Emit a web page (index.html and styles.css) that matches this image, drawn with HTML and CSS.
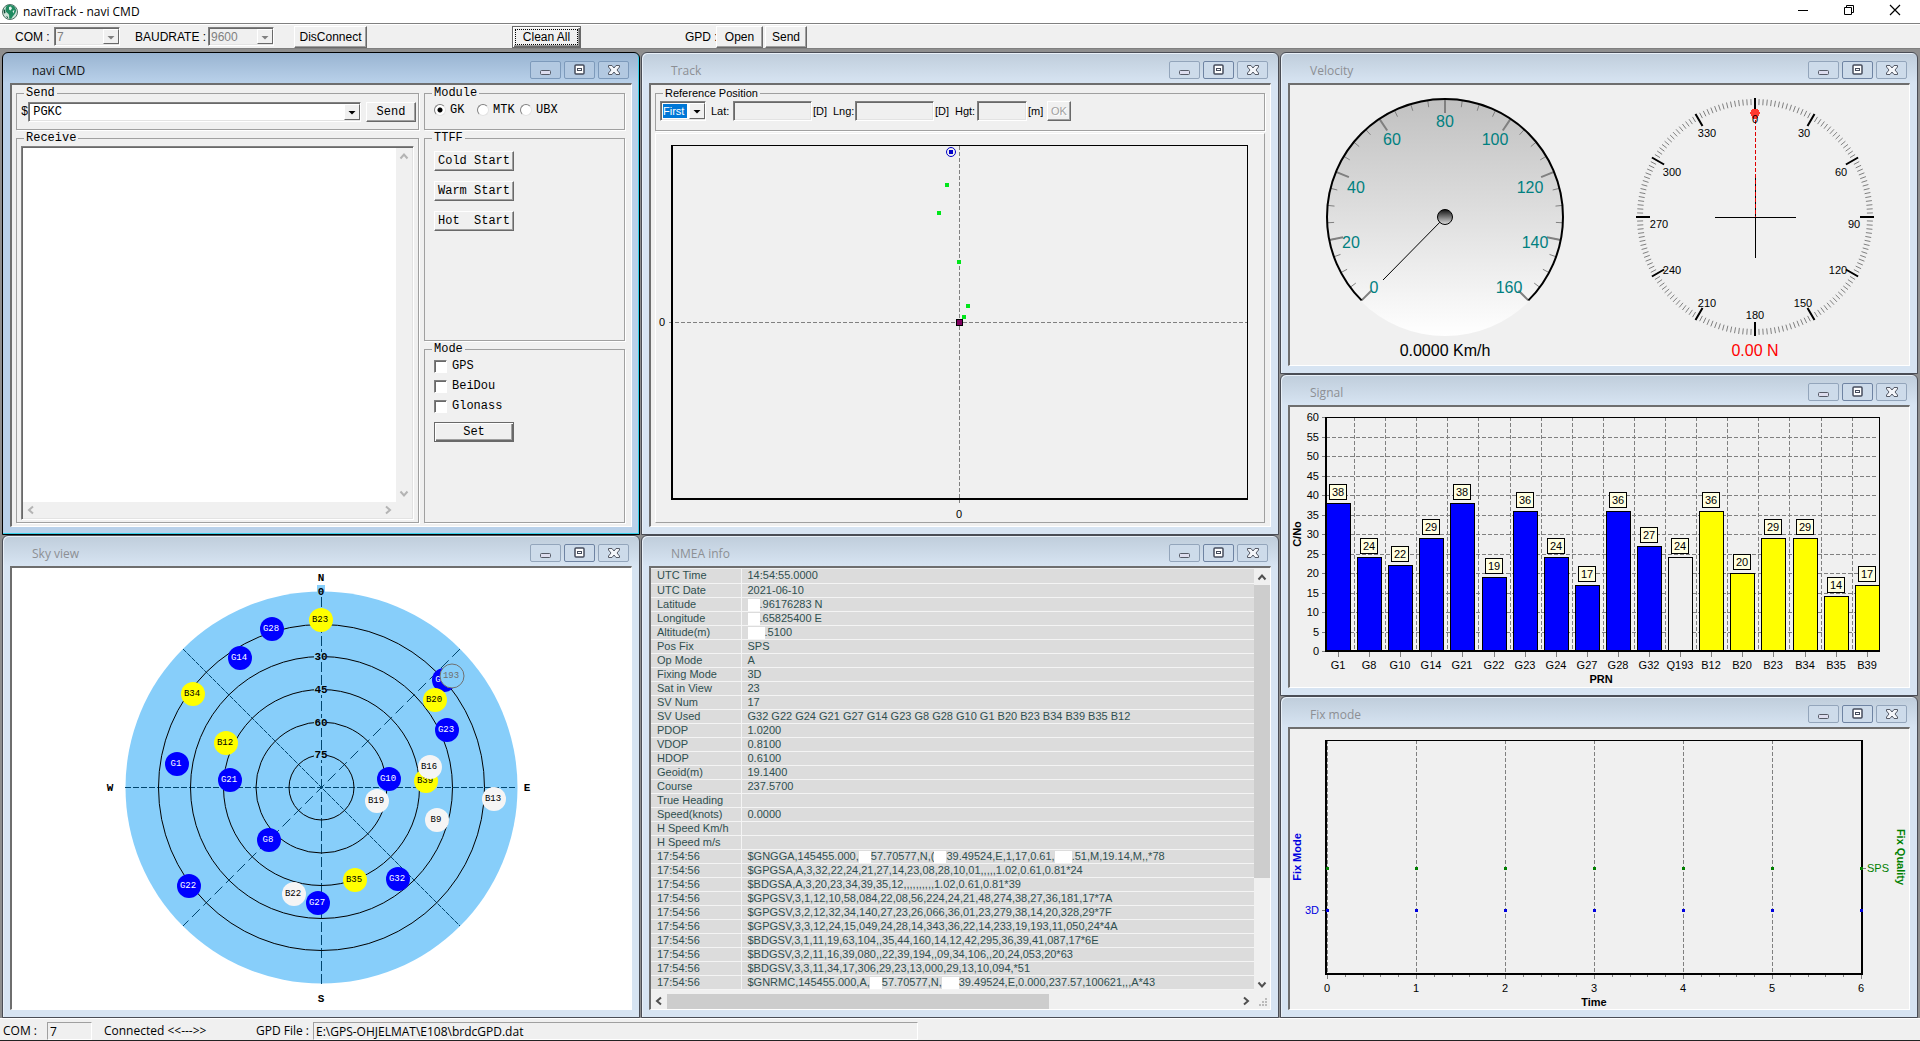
FILE: index.html
```html
<!DOCTYPE html>
<html lang="en">
<head>
<meta charset="utf-8">
<title>naviTrack - navi CMD</title>
<link rel="stylesheet" href="styles.css">
</head>
<body>
<svg class="defs" aria-hidden="true">
  <symbol id="min" viewBox="0 0 14 12"><rect x="1.500" y="6.500" width="10" height="4" rx="1" fill="#dde" stroke="#555a66"/></symbol>
  <symbol id="max" viewBox="0 0 14 12"><rect x="2" y="1" width="9" height="9" rx="1" fill="#fff" stroke="#454c5c" stroke-width="1.500"/><rect x="4.500" y="4.500" width="4" height="2" fill="#fff" stroke="#454c5c"/></symbol>
  <symbol id="cls" viewBox="0 0 14 12"><path d="M1.500 1.500h3.500L7 4l2-2.500h3.500v1.500L10 6l2.500 3v1.500H9L7 8l-2 2.500H1.500V9L4 6 1.500 3z" fill="#f4f6fa" stroke="#555a66" stroke-linejoin="round"/></symbol>
  <symbol id="up" viewBox="0 0 10 10"><path d="M1.500 7.500L5 3.500l3.500 4" fill="none" stroke="currentColor" stroke-width="2"/></symbol>
  <symbol id="down" viewBox="0 0 10 10"><path d="M1.500 2.500L5 6.500l3.500-4" fill="none" stroke="currentColor" stroke-width="2"/></symbol>
  <symbol id="left" viewBox="0 0 10 10"><path d="M7 1.500L3 5l4 3.500" fill="none" stroke="currentColor" stroke-width="2"/></symbol>
  <symbol id="right" viewBox="0 0 10 10"><path d="M3 1.500L7 5 3 8.500" fill="none" stroke="currentColor" stroke-width="2"/></symbol>
  <symbol id="drop" viewBox="0 0 10 10"><path d="M1.500 4h7L5 7.500z" fill="currentColor"/></symbol>
</svg>

<header class="app-title">
  <svg class="app-icon" viewBox="0 0 16 16" aria-hidden="true">
    <circle cx="8" cy="8" r="7.500" fill="#cfe3da" stroke="#4c6f62"/>
    <path d="M5 1.500C8 .5 12 1 13.500 4.500c1 2 .5 3-.5 5-1 1.500-2.500 3-3.500 5l-2 .5c-1-2 .5-3.500-1-5S3.500 8 3.500 6 4 3 5 1.500z" fill="#1f8a60"/>
    <path d="M7 3l2-.5 1 2-1.500 2L7 5.500zM10.500 7l2-1-1 3.500z" fill="#e4f2ec"/>
    <path d="M1.500 5l1.500 1 .5 3-1.500.5zM4 12l2 1-.5 1.500z" fill="#0d4a35"/>
  </svg>
  <span class="app-name">naviTrack - navi CMD</span>
  <div class="app-controls">
    <button aria-label="Minimize"><svg viewBox="0 0 12 12"><path d="M1 6.500h10" stroke="#000" fill="none"/></svg></button>
    <button aria-label="Restore"><svg viewBox="0 0 12 12"><path d="M1.500 3.500h7v7h-7zM3.500 3.500v-2h7v7h-2" stroke="#000" fill="none"/></svg></button>
    <button aria-label="Close"><svg viewBox="0 0 12 12"><path d="M1 1l10 10M11 1L1 11" stroke="#000" stroke-width="1.200" fill="none"/></svg></button>
  </div>
</header>

<div class="toolbar">
  <label class="tool-com" for="com">COM :</label>
  <div class="combo off"><select id="com" disabled><option>7</option></select><span class="arrow"><svg><use href="#drop"/></svg></span></div>
  <label class="tool-baud" for="baud">BAUDRATE :</label>
  <div class="combo off"><select id="baud" disabled><option>9600</option></select><span class="arrow"><svg><use href="#drop"/></svg></span></div>
  <button class="btn tool-dis">DisConnect</button>
  <button class="btn default tool-clean"><span class="focus">Clean All</span></button>
  <span class="tool-gpd">GPD :</span>
  <button class="btn tool-open">Open</button>
  <button class="btn tool-send">Send</button>
</div>

<main class="mdi">
  <div class="stack">
    <section class="win active">
      <div class="bar"><h2>navi CMD</h2><button aria-label="Minimize"><svg><use href="#min"/></svg></button><button class="mid" aria-label="Maximize"><svg><use href="#max"/></svg></button><button aria-label="Close"><svg><use href="#cls"/></svg></button></div>
      <div class="client cmd">
        <div class="cmd-left">
          <fieldset class="send"><legend>Send</legend>
            <div class="send-row">
              <label for="sentence">$</label>
              <div class="combo"><select id="sentence"><option>PGKC</option></select><span class="arrow"><svg><use href="#drop"/></svg></span></div>
              <button class="btn">Send</button>
            </div>
          </fieldset>
          <fieldset class="receive"><legend>Receive</legend>
            <div class="memo">
              <textarea aria-label="Receive"></textarea>
              <div class="vbar faint"><svg><use href="#up"/></svg><svg><use href="#down"/></svg></div>
              <div class="hbar faint"><svg><use href="#left"/></svg><svg><use href="#right"/></svg></div>
            </div>
          </fieldset>
        </div>
        <div class="cmd-right">
          <fieldset class="module"><legend>Module</legend>
            <div class="radios">
              <label><input type="radio" name="module" checked>GK</label>
              <label><input type="radio" name="module">MTK</label>
              <label><input type="radio" name="module">UBX</label>
            </div>
          </fieldset>
          <fieldset class="ttff"><legend>TTFF</legend>
            <div class="buttons">
              <button class="btn">Cold Start</button>
              <button class="btn">Warm Start</button>
              <button class="btn">Hot&nbsp; Start</button>
            </div>
          </fieldset>
          <fieldset class="mode"><legend>Mode</legend>
            <div class="checks">
              <label><input type="checkbox">GPS</label>
              <label><input type="checkbox">BeiDou</label>
              <label><input type="checkbox">Glonass</label>
              <button class="btn default">Set</button>
            </div>
          </fieldset>
        </div>
      </div>
    </section>
    <section class="win">
      <div class="bar"><h2>Sky view</h2><button aria-label="Minimize"><svg><use href="#min"/></svg></button><button class="mid" aria-label="Maximize"><svg><use href="#max"/></svg></button><button aria-label="Close"><svg><use href="#cls"/></svg></button></div>
      <div class="client white"><svg id="sky" class="plot" viewBox="12 569 619 441" role="img" aria-label="Sky view"></svg></div>
    </section>
  </div>

  <div class="stack">
    <section class="win">
      <div class="bar"><h2>Track</h2><button aria-label="Minimize"><svg><use href="#min"/></svg></button><button class="mid" aria-label="Maximize"><svg><use href="#max"/></svg></button><button aria-label="Close"><svg><use href="#cls"/></svg></button></div>
      <div class="client track">
        <fieldset class="ref"><legend>Reference Position</legend>
          <div class="ref-row">
            <div class="combo first"><select aria-label="Reference"><option>First</option></select><span class="arrow"><svg><use href="#drop"/></svg></span></div>
            <label for="lat">Lat:</label><input id="lat" class="field" disabled><span>[D]</span>
            <label for="lng">Lng:</label><input id="lng" class="field" disabled><span>[D]</span>
            <label for="hgt">Hgt:</label><input id="hgt" class="field short" disabled><span>[m]</span>
            <button class="btn ok" disabled>OK</button>
          </div>
        </fieldset>
        <div class="panel">
          <svg class="plot" viewBox="656 135 608 388" role="img" aria-label="Track plot">
            <g class="dash"><path d="M669 323.500H1247M959.500 147V504"/></g>
            <path class="black" d="M671 146.500H1248M1247.500 146V500"/>
            <path class="black thick" d="M672 146V501M671 500H1248"/>
            <g fill="#00e61a"><rect x="945" y="184" width="4" height="4"/><rect x="937" y="212" width="4" height="4"/><rect x="957" y="261" width="4" height="4"/><rect x="966" y="305" width="4" height="4"/><rect x="962" y="316" width="4" height="4"/></g>
            <rect x="956.500" y="320.500" width="6" height="6" fill="#800060" stroke="#000"/>
            <circle cx="951" cy="153" r="4.500" fill="none" stroke="#0000c8"/><rect x="949" y="151" width="4" height="4" fill="#0000c8"/>
            <text x="662" y="323">0</text><text x="959" y="515">0</text>
          </svg>
        </div>
      </div>
    </section>
    <section class="win">
      <div class="bar"><h2>NMEA info</h2><button aria-label="Minimize"><svg><use href="#min"/></svg></button><button class="mid" aria-label="Maximize"><svg><use href="#max"/></svg></button><button aria-label="Close"><svg><use href="#cls"/></svg></button></div>
      <div class="client nmea">
        <div class="table-view">
        <table>
          <tbody>
          <tr><th>UTC Time</th><td>14:54:55.0000</td></tr>
          <tr><th>UTC Date</th><td>2021-06-10</td></tr>
          <tr><th>Latitude</th><td><i></i>.96176283 N</td></tr>
          <tr><th>Longitude</th><td><i></i>.65825400 E</td></tr>
          <tr><th>Altitude(m)</th><td><i class="wide"></i>.5100</td></tr>
          <tr><th>Pos Fix</th><td>SPS</td></tr>
          <tr><th>Op Mode</th><td>A</td></tr>
          <tr><th>Fixing Mode</th><td>3D</td></tr>
          <tr><th>Sat in View</th><td>23</td></tr>
          <tr><th>SV Num</th><td>17</td></tr>
          <tr><th>SV Used</th><td>G32 G22 G24 G21 G27 G14 G23 G8 G28 G10 G1 B20 B23 B34 B39 B35 B12</td></tr>
          <tr><th>PDOP</th><td>1.0200</td></tr>
          <tr><th>VDOP</th><td>0.8100</td></tr>
          <tr><th>HDOP</th><td>0.6100</td></tr>
          <tr><th>Geoid(m)</th><td>19.1400</td></tr>
          <tr><th>Course</th><td>237.5700</td></tr>
          <tr><th>True Heading</th><td></td></tr>
          <tr><th>Speed(knots)</th><td>0.0000</td></tr>
          <tr><th>H Speed Km/h</th><td></td></tr>
          <tr><th>H Speed m/s</th><td></td></tr>
          <tr><th>17:54:56</th><td>$GNGGA,145455.000,<i></i>57.70577,N,(<i></i>39.49524,E,1,17,0.61,<i class="wide"></i>.51,M,19.14,M,,*78</td></tr>
          <tr><th>17:54:56</th><td>$GPGSA,A,3,32,22,24,21,27,14,23,08,28,10,01,,,,,1.02,0.61,0.81*24</td></tr>
          <tr><th>17:54:56</th><td>$BDGSA,A,3,20,23,34,39,35,12,,,,,,,,,,1.02,0.61,0.81*39</td></tr>
          <tr><th>17:54:56</th><td>$GPGSV,3,1,12,10,58,084,22,08,56,224,24,21,48,274,38,27,36,181,17*7A</td></tr>
          <tr><th>17:54:56</th><td>$GPGSV,3,2,12,32,34,140,27,23,26,066,36,01,23,279,38,14,20,328,29*7F</td></tr>
          <tr><th>17:54:56</th><td>$GPGSV,3,3,12,24,15,049,24,28,14,343,36,22,14,233,19,193,11,050,24*4A</td></tr>
          <tr><th>17:54:56</th><td>$BDGSV,3,1,11,19,63,104,,35,44,160,14,12,42,295,36,39,41,087,17*6E</td></tr>
          <tr><th>17:54:56</th><td>$BDGSV,3,2,11,16,39,080,,22,39,194,,09,34,106,,20,24,053,20*63</td></tr>
          <tr><th>17:54:56</th><td>$BDGSV,3,3,11,34,17,306,29,23,13,000,29,13,10,094,*51</td></tr>
          <tr><th>17:54:56</th><td>$GNRMC,145455.000,A,<i></i>57.70577,N,<i class="wide"></i>39.49524,E,0.000,237.57,100621,,,A*43</td></tr>
          </tbody>
        </table>
        </div>
        <div class="vbar"><svg><use href="#up"/></svg><span class="thumb"></span><svg><use href="#down"/></svg></div>
        <div class="hbar"><svg><use href="#left"/></svg><span class="thumb"></span><svg><use href="#right"/></svg></div>
        <svg class="grip" viewBox="0 0 16 16" fill="#bbb"><path d="M11 5h2v2h-2zM8 8h2v2H8zM11 8h2v2h-2zM5 11h2v2H5zM8 11h2v2H8zM11 11h2v2h-2z"/></svg>
      </div>
    </section>
  </div>

  <div class="stack">
    <section class="win">
      <div class="bar"><h2>Velocity</h2><button aria-label="Minimize"><svg><use href="#min"/></svg></button><button class="mid" aria-label="Maximize"><svg><use href="#max"/></svg></button><button aria-label="Close"><svg><use href="#cls"/></svg></button></div>
      <div class="client">
        <svg id="velocity" class="plot" viewBox="1290 85 619 280" role="img" aria-label="Velocity and heading">
          <defs>
            <linearGradient id="face" x1="0" y1="0" x2="0" y2="1"><stop offset="0" stop-color="#c0c0c0"/><stop offset="1" stop-color="#fff"/></linearGradient>
            <linearGradient id="hub" x1="0" y1="0" x2="0" y2="1"><stop offset="0" stop-color="#111"/><stop offset="1" stop-color="#e0e0e0"/></linearGradient>
          </defs>
          <circle cx="1445" cy="217" r="119" fill="url(#face)"/>
        </svg>
      </div>
    </section>
    <section class="win">
      <div class="bar"><h2>Signal</h2><button aria-label="Minimize"><svg><use href="#min"/></svg></button><button class="mid" aria-label="Maximize"><svg><use href="#max"/></svg></button><button aria-label="Close"><svg><use href="#cls"/></svg></button></div>
      <div class="client"><svg id="signal" class="plot" viewBox="1290 408 619 280" role="img" aria-label="Signal strength"></svg></div>
    </section>
    <section class="win">
      <div class="bar"><h2>Fix mode</h2><button aria-label="Minimize"><svg><use href="#min"/></svg></button><button class="mid" aria-label="Maximize"><svg><use href="#max"/></svg></button><button aria-label="Close"><svg><use href="#cls"/></svg></button></div>
      <div class="client"><svg id="fix" class="plot" viewBox="1290 730 619 280" role="img" aria-label="Fix mode"></svg></div>
    </section>
  </div>
</main>

<footer class="status">
  <label for="s-com">COM :</label><input id="s-com" class="s-com" value="7" readonly>
  <span class="s-conn">Connected &lt;&lt;---&gt;&gt;</span>
  <label for="s-file">GPD File :</label><input id="s-file" class="s-file" value="E:\GPS-OHJELMAT\E108\brdcGPD.dat" readonly>
</footer>
<script src="app.js"></script>
</body>
</html>
```
FILE: styles.css
```css
* { box-sizing: border-box; }

body {
  margin: 0;
  min-height: 100vh;
  display: flex;
  flex-direction: column;
  background: #f0f0f0;
  color: #000;
  font: 11px/14px "Liberation Sans", Arial, sans-serif;
}

button, input, select, textarea {
  margin: 0;
  padding: 0;
  border: 0;
  border-radius: 0;
  font: inherit;
  color: inherit;
}

.defs { position: absolute; width: 0; height: 0; }

/* Application caption */
.app-title {
  display: flex;
  align-items: center;
  height: 23px;
  padding: 0 2px;
  background: #fff;
  font: 12px/16px "Open Sans", "Noto Sans", sans-serif;
}
.app-icon { width: 16px; height: 16px; margin-right: 5px; }
.app-name { flex: 1; }
.app-controls { display: flex; align-self: flex-start; }
.app-controls button { width: 46px; height: 20px; background: none; }
.app-controls svg { width: 12px; height: 12px; display: block; margin: 0 auto; }

/* Bevelled controls */
.btn {
  height: 20px;
  background: #f0f0f0;
  border: 1px solid;
  border-color: #fff #696969 #696969 #fff;
  box-shadow: inset -1px -1px 0 #a0a0a0;
  text-align: center;
  white-space: nowrap;
}
.btn.default {
  border-color: #696969;
  box-shadow: inset 1px 1px 0 #fff, inset -1px -1px 0 #696969, inset -2px -2px 0 #a0a0a0;
}
.btn:disabled { color: #a0a0a0; text-shadow: 1px 1px 0 #fff; }

.combo, .field, .memo {
  background: #fff;
  border: 1px solid;
  border-color: #808080 #fff #fff #808080;
  box-shadow: inset 1px 1px 0 #696969, inset -1px -1px 0 #e3e3e3;
}
.combo { display: flex; height: 20px; padding: 1px 0 1px 2px; }
.combo select {
  flex: 1;
  min-width: 0;
  appearance: none;
  background: transparent;
  opacity: 1;
}
.combo .arrow {
  width: 16px;
  flex: none;
  display: flex;
  align-items: center;
  justify-content: center;
  background: #f0f0f0;
  border: 1px solid;
  border-color: #fff #696969 #696969 #fff;
}
.combo .arrow svg { width: 10px; height: 10px; }
.combo.off { background: #f0f0f0; color: #808080; width: 66px; height: 19px; }
.combo.off select { color: #808080; }

/* Toolbar */
.toolbar {
  display: flex;
  align-items: center;
  height: 26px;
  padding: 2px 0 1px 15px;
  border-top: 1px solid #808080;
  border-bottom: 1px solid #808080;
  box-shadow: inset 0 1px 0 #fff;
  font-size: 12px;
}
.toolbar .btn { height: 22px; }
.tool-com { width: 39px; }
.tool-baud { width: 73px; margin-left: 15px; }
.tool-dis { width: 73px; margin-left: 20px; }
.tool-clean { width: 69px; margin-left: 145px; padding: 2px; }
.focus { display: block; border: 1px dotted #000; line-height: 14px; }
.tool-gpd { width: 31px; margin-left: 104px; white-space: nowrap; }
.tool-open { width: 47px; }
.tool-send { width: 42px; margin-left: 2px; }

/* Child windows */
.mdi {
  flex: 1;
  display: grid;
  grid-template-columns: repeat(3, minmax(0, 1fr));
  gap: 1px;
  padding: 3px 2px 0;
  background: #8e8e8e;
}
.stack { display: grid; grid-auto-rows: minmax(0, 1fr); min-width: 0; }
.win {
  display: flex;
  flex-direction: column;
  min-width: 0;
  padding: 0 7px 7px;
  border: 1px solid #4a4d55;
  border-radius: 6px 6px 0 0;
  background: linear-gradient(#bfcddb, #d7e4f2 30px);
  box-shadow: inset 1px 1px 0 #e8f0f8;
}
.win.active {
  background: linear-gradient(#99b4d1, #b9d1ea 30px);
  box-shadow: inset -1px -1px 0 #35d0ea;
  border-color: #000;
}
.bar {
  display: flex;
  gap: 3px;
  align-items: flex-end;
  height: 30px;
  flex: none;
  padding: 0 3px 4px 22px;
}
.bar h2 {
  flex: 1;
  margin: 0;
  font: 12px/16px "Open Sans", "Noto Sans", sans-serif;
  color: #8c8f94;
}
.active .bar h2 { color: #111; }
.bar button {
  width: 31px;
  height: 18px;
  border: 1px solid #93a5bb;
  border-radius: 2px;
  background: #cddbea;
}
.bar button.mid { border-color: #6f84a3; }
.active .bar button { background: #b3c9e1; border-color: #7d9abb; }
.bar svg { display: block; width: 14px; height: 12px; margin: 0 auto; }
.client {
  flex: 1;
  min-height: 0;
  background: #f0f0f0;
  border: solid;
  border-width: 2px 1px 1px 2px;
  border-color: #6e6e6e #fff #fff #6e6e6e;
}
.client.white { background: #fff; }
.plot { display: block; width: 100%; height: 100%; contain: size; }

/* Group boxes */
fieldset {
  min-width: 0;
  margin: 0;
  padding: 0;
  border: 1px solid #a0a0a0;
  box-shadow: 1px 1px 0 #fff;
}
legend { height: 14px; margin-left: 7px; padding: 0 2px; line-height: 14px; }

/* Command window */
.cmd {
  display: flex;
  gap: 5px;
  padding: 1px 6px 3px 4px;
  font: 12px/14px "Liberation Mono", "Courier New", monospace;
}
.cmd-left { flex: 1; min-width: 0; display: flex; flex-direction: column; gap: 1px; }
.cmd-right { width: 201px; display: flex; flex-direction: column; gap: 1px; }
.send, .module { height: 44px; }
.send-row { display: flex; align-items: center; padding: 2px 2px 0 4px; }
.send-row .combo { flex: 1; }
.send-row select { padding-left: 2px; }
.send-row .btn { width: 50px; margin-left: 5px; }
.receive { flex: 1; display: flex; flex-direction: column; }
.memo {
  flex: 1;
  display: grid;
  grid-template: 1fr 16px / 1fr 16px;
  margin: 1px 4px 2px 4px;
  padding: 1px;
  background: #f0f0f0;
}
.memo textarea { resize: none; background: #fff; outline: 0; width: 100%; height: 100%; }
.vbar, .hbar { display: flex; justify-content: space-between; align-items: center; background: #f0f0f0; color: #505050; }
.vbar { flex-direction: column; padding: 3px 0; }
.hbar { padding: 0 3px; }
.vbar svg, .hbar svg { width: 10px; height: 10px; flex: none; }
.faint { color: #b4b4b4; }
.radios { display: flex; padding: 3px 0 0 9px; }
.radios label { width: 43px; display: flex; align-items: center; gap: 4px; }
input[type="radio"] {
  appearance: none;
  width: 12px;
  height: 12px;
  flex: none;
  border-radius: 50%;
  border: 1px solid;
  border-color: #808080 #e3e3e3 #e3e3e3 #808080;
  background: #fff;
}
input[type="radio"]:checked { background: radial-gradient(circle, #000 2px, #fff 3px); }
input[type="checkbox"] {
  appearance: none;
  width: 13px;
  height: 13px;
  border: 1px solid;
  border-color: #808080 #fff #fff #808080;
  background: #fff;
  box-shadow: inset 1px 1px 0 #696969;
}
.ttff { height: 210px; }
.buttons { display: flex; flex-direction: column; gap: 10px; padding: 6px 0 0 9px; }
.buttons .btn, .checks .btn { width: 80px; }
.mode { flex: 1; }
.checks { display: flex; flex-direction: column; padding-left: 9px; }
.checks label { display: flex; align-items: center; gap: 5px; height: 20px; }
.checks .btn { margin-top: 6px; }

/* Track window */
.track { display: flex; flex-direction: column; gap: 2px; padding: 1px 5px 3px 4px; }
.ref { height: 45px; }
.ref-row { display: flex; align-items: center; padding: 1px 4px 0; }
.ref-row label { width: 22px; margin-left: 5px; white-space: nowrap; }
.ref-row span:not(.arrow) { width: 16px; padding-left: 1px; }
.first { width: 46px; }
.first select { background: #0078d7; color: #fff; margin: 1px 2px 1px 0; }
.field { width: 79px; height: 20px; background: #f0f0f0; }
.field.short { width: 50px; }
.ok { width: 24px; margin-left: 4px; }
.panel { flex: 1; min-height: 0; border: 1px solid; border-color: #fff #a0a0a0 #a0a0a0 #fff; }

/* NMEA window */
.nmea { display: grid; grid-template: minmax(0, 1fr) 16px / minmax(0, 1fr) 16px; padding-top: 1px; }
.table-view { overflow: hidden; }
.nmea table { width: 100%; border-collapse: collapse; table-layout: fixed; color: #2f4f4f; }
.nmea th, .nmea td {
  height: 14px;
  padding: 0 0 0 6px;
  line-height: 13px;
  font-weight: normal;
  text-align: left;
  white-space: nowrap;
  background: #dcdcdc;
  border-bottom: 1px solid #f4f4f4;
}
.nmea th { width: 90px; border-right: 1px solid #f4f4f4; }
.nmea i { display: inline-block; width: 12px; height: 12px; background: #fff; vertical-align: bottom; }
.nmea i.wide { width: 17px; }
.thumb { background: #cdcdcd; }
.nmea .vbar { justify-content: flex-start; gap: 3px; }
.nmea .vbar .thumb { width: 16px; height: 70%; }
.nmea .vbar svg:last-child { margin-top: auto; }
.nmea .hbar { gap: 3px; justify-content: flex-start; }
.nmea .hbar .thumb { width: 64%; height: 15px; }
.nmea .hbar svg:last-child { margin-left: auto; }
.grip { width: 16px; height: 16px; }

/* Drawings */
.plot text { text-anchor: middle; dominant-baseline: central; font-size: 11px; fill: #000; }
.plot path, .plot rect { shape-rendering: crispEdges; }
.plot .dash path { fill: none; stroke: #808080; stroke-dasharray: 4 2; }
.plot .black { fill: none; stroke: #000; }
.plot .thick { stroke-width: 2; }
.plot .gray { fill: none; stroke: #808080; }
.plot text.end { text-anchor: end; }
.plot text.start { text-anchor: start; }
.plot text.bold { font-weight: bold; }
.plot text.big { font-size: 16px; }
.plot text.teal { fill: #008080; }
.plot text.red { fill: #f00; }
.plot text.blue { fill: #0000e0; }
.plot text.green { fill: #008000; }
.plot .sweep { fill: none; shape-rendering: auto; }
#sky text { font-family: "Liberation Mono", "Courier New", monospace; }
#sky text.sat { font-size: 9px; }
#sky text.light { fill: #fff; }
#sky text.dim { fill: #707070; }

/* Status bar */
.status {
  display: flex;
  align-items: center;
  height: 23px;
  padding: 3px 0 0 3px;
  border-top: 1px solid #fff;
  border-bottom: 1px solid #222;
  font: 12px/16px "Open Sans", "Noto Sans", sans-serif;
}
.status input {
  height: 18px;
  padding-left: 2px;
  background: transparent;
  border: 1px solid;
  border-color: #a0a0a0 #fff #fff #a0a0a0;
}
.status label { white-space: nowrap; }
.s-com { width: 45px; margin-left: 10px; }
.s-conn { width: 152px; margin-left: 12px; }
.s-file { width: 605px; margin-left: 4px; }
```
FILE: app.js
```js
const NS = "http://www.w3.org/2000/svg";

function add(svg, tag, attrs, text) {
  const el = document.createElementNS(NS, tag);
  for (const key in attrs) el.setAttribute(key, attrs[key]);
  if (text !== undefined) el.textContent = text;
  svg.appendChild(el);
  return el;
}

function polar(cx, cy, r, deg) {
  const a = (deg - 90) * Math.PI / 180;
  return (cx + r * Math.cos(a)).toFixed(1) + " " + (cy + r * Math.sin(a)).toFixed(1);
}

function spokes(cx, cy, r1, r2, angles) {
  return angles.map(a => "M" + polar(cx, cy, r1, a) + "L" + polar(cx, cy, r2, a)).join("");
}

const range = (n, step, from = 0) => Array.from({ length: n }, (_, i) => from + i * step);

/* Sky view */
(function () {
  const s = document.getElementById("sky"), cx = 321.5, cy = 788.5;
  add(s, "circle", { cx, cy, r: 196, fill: "#87cefa" });
  add(s, "rect", { x: 317, y: 586, width: 8, height: 10, fill: "#87cefa" });
  const line = { stroke: "#00456e", fill: "none" };
  add(s, "path", { ...line, d: "M321.500 598V985", "stroke-dasharray": "10 3" });
  add(s, "path", { ...line, d: "M125 788.500H516", "stroke-dasharray": "6 2" });
  add(s, "path", { ...line, d: "M460 650L183 927", "stroke-dasharray": "11 5", class: "sweep" });
  add(s, "path", { ...line, d: "M183 650L460 927", "stroke-dasharray": "5 1", class: "sweep" });
  for (const r of [163, 131, 98, 65.5, 32.5]) add(s, "circle", { cx, cy, r, fill: "none", stroke: "#000" });
  for (const [t, y] of [["0", 593], ["30", 658], ["45", 691], ["60", 724], ["75", 756]]) {
    if (t !== "0") add(s, "rect", { x: 314, y: y - 5, width: 13, height: 10, fill: "#87cefa" });
    add(s, "text", { x: 321, y, class: "bold" }, t);
  }
  for (const [t, x, y] of [["N", 321, 579], ["S", 321, 1000], ["W", 110, 789], ["E", 527, 789]])
    add(s, "text", { x, y, class: "bold" }, t);
  const fills = { G: "#0000ff", B: "#ffff00", W: "#f5f5f5", Q: "#87cefa" };
  const sats = [
    ["G", "G28", 272, 630], ["B", "B23", 321, 621], ["G", "G14", 240, 659], ["B", "B34", 193, 695],
    ["B", "B12", 226, 744], ["G", "G1", 177, 765], ["G", "G21", 230, 781], ["G", "G10", 389, 780],
    ["B", "B39", 426, 782], ["W", "B16", 430, 768], ["W", "B19", 377, 802], ["W", "B13", 494, 800],
    ["W", "B9", 437, 821], ["G", "G8", 269, 841], ["G", "G22", 189, 887], ["W", "B22", 294, 895],
    ["G", "G27", 318, 904], ["B", "B35", 355, 881], ["G", "G32", 398, 880], ["G", "G", 444, 681, 438],
    ["Q", "193", 452, 677], ["B", "B20", 435, 701], ["G", "G23", 447, 731]
  ];
  for (const [kind, name, x, y, labelX = x - 1] of sats) {
    add(s, "circle", { cx: x, cy: y, r: 12, fill: fills[kind], stroke: kind === "Q" ? "#707070" : "none" });
    add(s, "text", { x: labelX, y, class: "sat" + (kind === "G" ? " light" : kind === "Q" ? " dim" : "") }, name);
  }
})();

/* Speedometer and compass */
(function () {
  const s = document.getElementById("velocity"), cx = 1445, cy = 217;
  add(s, "path", { d: spokes(cx, cy, 111, 118, range(33, 8.4375, -135)), stroke: "#808080", class: "sweep" });
  add(s, "path", { d: spokes(cx, cy, 104, 118, range(9, 33.75, -135)), stroke: "#808080", "stroke-width": 2, class: "sweep" });
  add(s, "path", { d: "M" + polar(cx, cy, 118, 225) + "A118 118 0 1 1 " + polar(cx, cy, 118, 135), stroke: "#000", "stroke-width": 2, class: "sweep" });
  add(s, "path", { d: "M1445 217L1383 280", stroke: "#000", class: "sweep" });
  add(s, "circle", { cx, cy, r: 7.5, fill: "url(#hub)", stroke: "#000" });
  [["0", 1374, 287], ["20", 1351, 242], ["40", 1356, 187], ["60", 1392, 139], ["80", 1445, 121],
   ["100", 1495, 139], ["120", 1530, 187], ["140", 1535, 242], ["160", 1509, 287]]
    .forEach(([t, x, y]) => add(s, "text", { x, y, class: "big teal" }, t));
  add(s, "text", { x: 1445, y: 350, class: "big" }, "0.0000 Km/h");

  const hx = 1755;
  add(s, "path", { d: spokes(hx, cy, 112, 118, range(180, 2)), stroke: "#808080", class: "sweep" });
  add(s, "path", { d: spokes(hx, cy, 105, 119, range(12, 30)), stroke: "#000", "stroke-width": 2, class: "sweep" });
  add(s, "path", { d: "M1715 217.500H1796M1755.500 177V258", class: "black" });
  add(s, "path", { d: "M1755.500 120V217", stroke: "#e00000", "stroke-dasharray": "4 2" });
  add(s, "path", { d: "M1752 109h6l2 4-3 6h-4l-3-6z", fill: "#ff3a30", class: "mark" });
  [["0", 1755, 119], ["30", 1804, 133], ["60", 1841, 172], ["90", 1854, 224], ["120", 1838, 270], ["150", 1803, 303],
   ["180", 1755, 315], ["210", 1707, 303], ["240", 1672, 270], ["270", 1659, 224], ["300", 1672, 172], ["330", 1707, 133]]
    .forEach(([t, x, y]) => add(s, "text", { x, y }, t));
  add(s, "text", { x: 1755, y: 350, class: "big red" }, "0.00 N");
})();

/* Signal strength bars */
(function () {
  const s = document.getElementById("signal"), left = 1326, right = 1880, top = 418, base = 652;
  const data = [["G1", 38], ["G8", 24], ["G10", 22], ["G14", 29], ["G21", 38], ["G22", 19], ["G23", 36], ["G24", 24], ["G27", 17],
    ["G28", 36], ["G32", 27], ["Q193", 24], ["B12", 36], ["B20", 20], ["B23", 29], ["B34", 29], ["B35", 14], ["B39", 17]];
  const fills = { G: "#0000ff", B: "#ffff00", Q: "#f0f0f0" };
  const yOf = v => Math.round(base - v * 3.9);
  const xOf = i => Math.round(1338 + i * 31.1);
  const grid = add(s, "g", { class: "dash" });
  add(grid, "path", { d: range(11, 5, 5).map(v => `M${left} ${yOf(v) + 0.5}H${right - 3}`).join("") });
  add(grid, "path", { d: range(17, 1).map(i => `M${xOf(i) + 16.5} ${top}V${base}`).join("") });
  add(s, "path", { class: "gray", d: range(13, 5).map(v => `M${left - 4} ${yOf(v) + 0.5}h4`).join("") + range(18, 1).map(i => `M${xOf(i) + 0.5} ${base}v6`).join("") });
  for (const v of range(13, 5)) add(s, "text", { x: 1319, y: yOf(v), class: "end" }, v);
  data.forEach(([name, v], i) => {
    const x = xOf(i), y = yOf(v);
    add(s, "rect", { x: x - 11.5, y: y + 0.5, width: 24, height: base - y, fill: fills[name[0]], stroke: "#000" });
    add(s, "rect", { x: x - 8.5, y: y - 18.5, width: 17, height: 15, fill: "#ffffe1", stroke: "#000" });
    add(s, "text", { x, y: y - 11 }, v);
    add(s, "text", { x, y: 666 }, name);
  });
  add(s, "path", { class: "black", d: `M${left} ${top + 0.5}H${right}M${right - 0.5} ${top}V${base}` });
  add(s, "path", { class: "black thick", d: `M${left} ${top}V${base + 1}M${left - 1} ${base}H${right}` });
  add(s, "text", { x: 1601, y: 680, class: "bold" }, "PRN");
  add(s, "text", { transform: "translate(1297 535) rotate(-90)", class: "bold" }, "C/No");
})();

/* Fix mode and quality over time */
(function () {
  const s = document.getElementById("fix");
  const grid = add(s, "g", { class: "dash" });
  add(grid, "path", { d: range(6, 89, 1327.5).map(x => `M${x} 741V975`).join("") });
  add(s, "path", { class: "gray", d: range(7, 89, 1327.5).map(x => `M${x} 975v5`).join("") + range(31, 17.8, 1327.5).map(x => `M${Math.round(x - 0.5) + 0.5} 975v3`).join("") + "M1322 911.500h4M1862 869.500h4" });
  add(s, "path", { class: "black", d: "M1325 741.500H1863" });
  add(s, "path", { class: "black thick", d: "M1326 741V976M1325 975H1863M1862 741V976" });
  for (const x of range(7, 89, 1326)) {
    add(s, "rect", { x, y: 868, width: 3, height: 3, fill: "#008000" });
    add(s, "rect", { x, y: 910, width: 3, height: 3, fill: "#0000e0" });
  }
  range(7, 1).forEach(i => add(s, "text", { x: 1327 + i * 89, y: 989 }, i));
  add(s, "text", { x: 1594, y: 1003, class: "bold" }, "Time");
  add(s, "text", { x: 1319, y: 911, class: "end blue" }, "3D");
  add(s, "text", { x: 1867, y: 869, class: "start green" }, "SPS");
  add(s, "text", { transform: "translate(1297 858) rotate(-90)", class: "bold blue" }, "Fix Mode");
  add(s, "text", { transform: "translate(1901 858) rotate(90)", class: "bold green" }, "Fix Quality");
})();
```
